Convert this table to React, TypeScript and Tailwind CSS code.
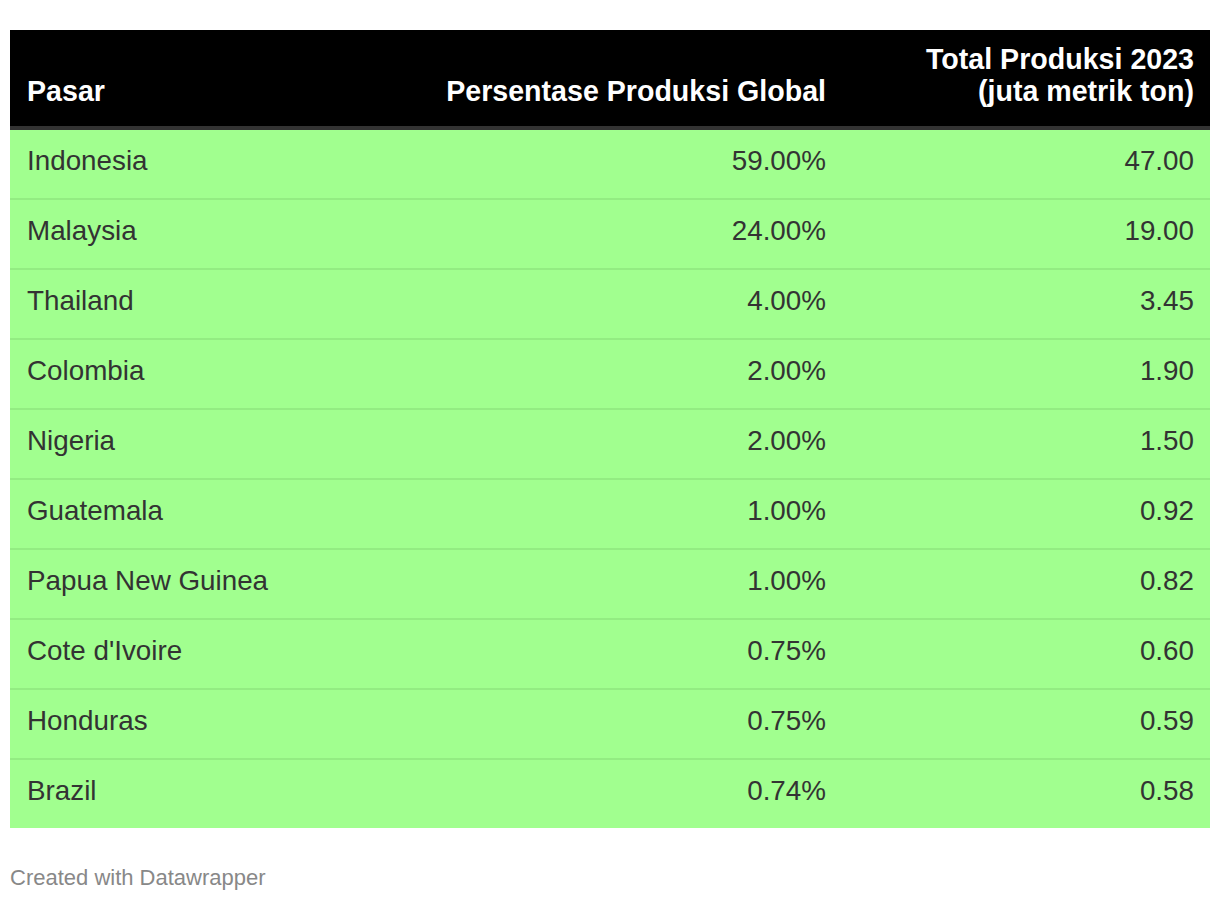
const rows: [string, string, string][] = [
  ["Indonesia", "59.00%", "47.00"],
  ["Malaysia", "24.00%", "19.00"],
  ["Thailand", "4.00%", "3.45"],
  ["Colombia", "2.00%", "1.90"],
  ["Nigeria", "2.00%", "1.50"],
  ["Guatemala", "1.00%", "0.92"],
  ["Papua New Guinea", "1.00%", "0.82"],
  ["Cote d'Ivoire", "0.75%", "0.60"],
  ["Honduras", "0.75%", "0.59"],
  ["Brazil", "0.74%", "0.58"],
];

export default function App() {
  return (
    <div className="min-h-[900px] bg-white pt-[30px] font-['Liberation_Sans',Arial,sans-serif]">
      <div className="mx-[10px] w-[1200px]">
        {/* header */}
        <div className="grid grid-cols-[400px_432px_368px] items-end border-b-4 border-[#333333] bg-black pb-[19px] pt-[13px] text-[28.6px] font-bold leading-[32px] text-white">
          <div className="pl-[17px]">Pasar</div>
          <div className="pr-4 text-right">Persentase Produksi Global</div>
          <div className="pr-4 text-right">
            Total Produksi 2023
            <br />
            (juta metrik ton)
          </div>
        </div>

        {/* body */}
        <div className="bg-[#a1ff8f] text-[27.8px] text-[#333333]">
          {rows.map(([pasar, pct, total], i) => (
            <div
              key={pasar}
              className={
                "grid grid-cols-[400px_432px_368px] items-start pt-[10px] leading-normal" +
                (i < rows.length - 1 ? " h-[70px] border-b-2 border-[#93ec82]" : " h-[68px]")
              }
            >
              <div className="pl-[17px]">{pasar}</div>
              <div className="pr-4 text-right">{pct}</div>
              <div className="pr-4 text-right">{total}</div>
            </div>
          ))}
        </div>

        <div className="mt-[33px] text-[22px] text-[#888888]">Created with Datawrapper</div>
      </div>
    </div>
  );
}
